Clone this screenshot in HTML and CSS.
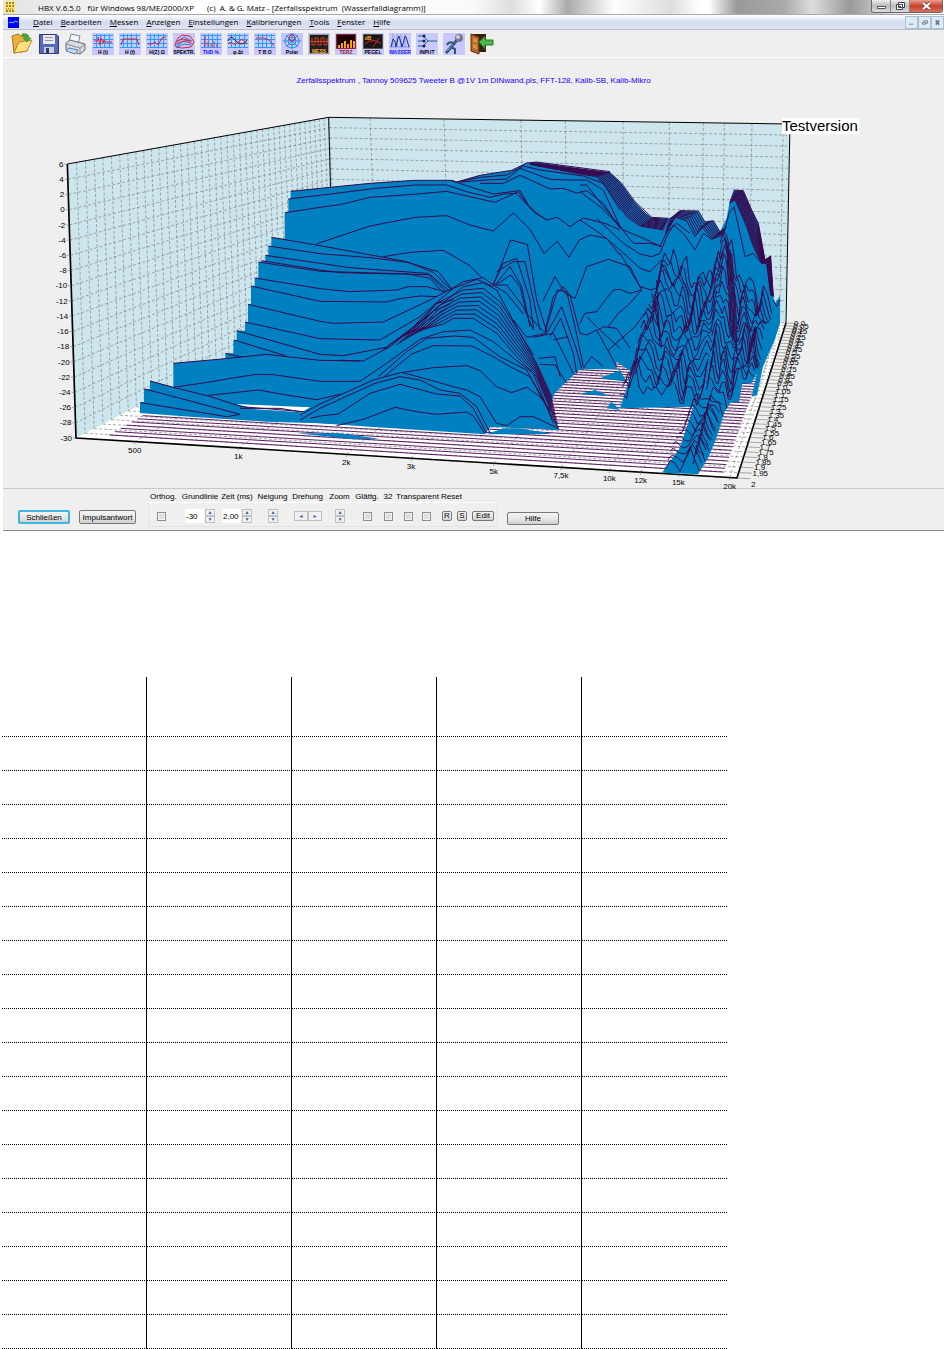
FILE: index.html
```html
<!DOCTYPE html>
<html lang="de">
  <head>
    <meta charset="utf-8" />
    <meta name="viewport" content="width=device-width, initial-scale=1.0" />
    <title>HBX V.6.5.0</title>
    <link rel="stylesheet" href="styles.css">
  </head>
  <body>
    <main class="window">
      <header class="titlebar">
        <svg class="app-icon" viewBox="0 0 10 12"><path fill="#ffe860" d="M0 0h10v12H0z"/><path stroke="#402040" stroke-dasharray="2 1" d="M1 2h8M1 5h8M1 10h8"/><path stroke="#d03030" stroke-dasharray="1 1" d="M1 8h8"/></svg>
        <span class="title-app">HBX V.6.5.0</span>
        <span class="title-os">für Windows 98/ME/2000/XP</span>
        <span>(c)&nbsp; A. &amp; G. Matz - [Zerfallsspektrum&nbsp; (Wasserfalldiagramm)]</span>
        <div class="win-buttons">
          <button aria-label="Minimieren"><svg viewBox="0 0 18 12"><path fill="#fff" stroke="#556" d="M5.500 6.500h8v2h-8z"/></svg></button>
          <button aria-label="Verkleinern"><svg viewBox="0 0 18 12"><path fill="#fff" stroke="#445" d="M7.500 2.500h6v5h-6zM5.500 4.500h6v5h-6z"/><path fill="#445" d="M8 6h2v2H8z"/></svg></button>
          <button class="close" aria-label="Beenden"><svg viewBox="0 0 30 12"><path stroke="#644" stroke-width="3.500" d="M12 3l7 6M19 3l-7 6"/><path stroke="#fff" stroke-width="2" d="M12 3l7 6M19 3l-7 6"/></svg></button>
        </div>
      </header>

      <nav class="menubar">
        <svg class="doc-icon" viewBox="0 0 11 11"><path fill="#00f" d="M0 0h11v11H0z"/><path fill="none" stroke="#6cf" d="M1 6l2-1 2 1 2-2 3 1"/></svg>
        <a href="#"><u>D</u>atei</a>
        <a href="#"><u>B</u>earbeiten</a>
        <a href="#"><u>M</u>essen</a>
        <a href="#"><u>A</u>nzeigen</a>
        <a href="#"><u>E</u>instellungen</a>
        <a href="#"><u>K</u>alibrierungen</a>
        <a href="#"><u>T</u>ools</a>
        <a href="#"><u>F</u>enster</a>
        <a href="#"><u>H</u>ilfe</a>
        <div class="mdi-buttons">
          <button aria-label="Fenster minimieren"><svg viewBox="0 0 12 13"><path stroke="#678" stroke-width="1" d="M3 8.500h5"/></svg></button>
          <button aria-label="Fenster wiederherstellen"><svg viewBox="0 0 12 13"><path fill="none" stroke="#678" d="M5.500 6V4.500h4v3H8M3.500 6.500h4v2h-4z"/></svg></button>
          <button aria-label="Fenster schließen"><svg viewBox="0 0 12 13"><path stroke="#678" stroke-width="2" d="M4 4l4 5M8 4L4 9"/></svg></button>
        </div>
      </nav>

      <div class="toolbar">
        <button class="plain" aria-label="Öffnen"><svg viewBox="0 0 22 22"><path fill="#e8b040" stroke="#a87820" d="M1 3l6-2 3 2 6 1v14L3 20z"/><path fill="#ffe080" stroke="#b88820" d="M3 20L8 9l13-2-5 11z"/><path fill="#40b040" stroke="#187818" stroke-width=".5" d="M11 1c5-1 7 1 7 4h2l-4 4-4-4h3c0-2-2-2-4-2z"/></svg></button>
        <button class="plain" aria-label="Speichern"><svg viewBox="0 0 22 22"><path fill="#5868b8" stroke="#303880" d="M1.500 1.500h17l2 2v17h-19z"/><path fill="#e8e8f0" d="M5 2h12v9H5z"/><path stroke="#99a" d="M7 4.500h8M7 7.500h8"/><path fill="#c8d0d8" d="M6 14h10v6H6z"/><path fill="#303880" d="M8 15h3v5H8z"/></svg></button>
        <button class="plain" aria-label="Drucken"><svg viewBox="0 0 22 22"><path fill="#f4f8ff" stroke="#789" d="M6 1l9 2-2 8-9-2z"/><path fill="#d8dce0" stroke="#667" d="M1 10l4-3 15 4v6l-5 4-14-4z"/><path fill="none" stroke="#889" d="M1 11l14 4v5M15 15l5-4"/><path fill="#b8e0f8" stroke="#679" d="M4 15l9 2-3 4-9-3z"/></svg></button>
        <button aria-label="H(t)"><svg viewBox="0 0 22 22"><use href="#grid"/><path class="red" d="M2 8h4V4l2 8 1-7 2 5 1-3 1 2h7"/><text x="11" y="21">H (t)</text></svg></button>
        <button aria-label="H(f)"><svg viewBox="0 0 22 22"><use href="#grid"/><path class="red" d="M2 12l2-6h14l2 6"/><text x="11" y="21">H (f)</text></svg></button>
        <button aria-label="H(Z)"><svg viewBox="0 0 22 22"><use href="#grid"/><path class="red" d="M2 11h4l3-2 3 3 4-7 4-1"/><text x="11" y="21">H(Z) Ω</text></svg></button>
        <button aria-label="Spektrum"><svg viewBox="0 0 22 22"><path class="red" fill="#f8a0b0" d="M2 11l3-6 4-3 8 1 4 6-3 5-9 1-6-1z"/><path fill="none" stroke="#2080e0" d="M2 13l4-6 5-3 8 4M3 14l6-5 5-2 5 4M4 14l7-3 7 1"/><path class="red" d="M4 8l6-2 8 2M4 11l6-3 8 2"/><text x="11" y="21">SPEKTR.</text></svg></button>
        <button aria-label="THD"><svg viewBox="0 0 22 22"><use href="#grid"/><path class="red" d="M5 3v11M8 9v5M11 11v3M14 8v6M17 11v3"/><text class="blue" x="11" y="21">THD %</text></svg></button>
        <button aria-label="Phase"><svg viewBox="0 0 22 22"><use href="#grid"/><path fill="none" stroke="#222" d="M1 8c3-7 5-3 8 0s7 5 11-1"/><path class="red" d="M1 11c3-5 5 3 9-1s6-5 10 1"/><text x="11" y="21">φ Δt</text></svg></button>
        <button aria-label="TBO"><svg viewBox="0 0 22 22"><use href="#grid"/><path class="red" d="M2 5h8l5 2 5 6"/><text x="11" y="21">T B O</text></svg></button>
        <button aria-label="Polar"><svg viewBox="0 0 22 22"><g fill="none" stroke="#2090e8"><circle cx="11" cy="8" r="7"/><circle cx="11" cy="8" r="4"/><path d="M11 0v16M2 8h18M5 2l12 12M17 2L5 14"/></g><circle class="red" cx="11" cy="5" r="3"/><text x="11" y="21">Polar</text></svg></button>
        <button aria-label="Oszilloskop"><svg viewBox="0 0 22 22"><path fill="#202020" stroke="#999" d="M1.500 1.500h19v19h-19z"/><path stroke="#d84018" fill="none" d="M2 8.500h18M4 5v7h3V5h3v7h3V5h3v7h3V5"/><text class="amber" x="11" y="20">MESS</text></svg></button>
        <button aria-label="Terz"><svg viewBox="0 0 22 22"><path fill="#180000" stroke="#a01838" d="M1.500 1.500h19v14h-19z"/><path stroke="#ffa010" stroke-width="2" d="M4 15v-3M7 15v-5M10 15V8M13 15v-4M16 15V7M19 15V8"/><text class="crimson" x="11" y="21">TERZ</text></svg></button>
        <button aria-label="Pegel"><svg viewBox="0 0 22 22"><path fill="#181818" stroke="#555" d="M1.500 1.500h19v14h-19z"/><path class="red" d="M3 11q8-7 16 0M11 14l6-9"/><text class="amber" x="6" y="7">dB</text><text x="11" y="21">PEGEL</text></svg></button>
        <button aria-label="Wasserfall"><svg viewBox="0 0 22 22"><path stroke="#8098f0" d="M1 14h20M4 1v13M8 1v13M12 1v13M16 1v13"/><path fill="none" stroke="#203080" d="M2 14L4 6l2 2 1 6 2-9 1-2 3 11 3-11 1 1 3 10"/><text class="blue" x="11" y="21">WASSER</text></svg></button>
        <button aria-label="Input"><svg viewBox="0 0 22 22"><path fill="none" stroke="#206090" stroke-width="1" d="M2 3h5l5 5h9M2 8h6M2 13h5l5-5"/><g fill="#124"><circle cx="8" cy="3" r="1.500"/><circle cx="8" cy="8" r="1.500"/><circle cx="8" cy="13" r="1.500"/></g><text x="11" y="21">INPUT</text></svg></button>
        <button aria-label="Mikrofon"><svg viewBox="0 0 22 22"><path stroke="#345078" stroke-width="3" d="M3 20L14 7"/><path stroke="#88b8e8" stroke-width="1" d="M4 18l8-9"/><path fill="none" stroke="#345078" stroke-width="2" d="M4 12c2-4 5-3 8-1M8 14l4 2v5"/><circle cx="16" cy="5" r="4" fill="#778"/><circle cx="15" cy="4" r="2" fill="#ccd"/></svg></button>
        <button class="plain" aria-label="Beenden"><svg viewBox="0 0 22 22"><path fill="#321" d="M2 1h14v18H2z"/><path fill="#b86828" stroke="#5a2c08" d="M1 1l8 3v17l-8-3z"/><path fill="#d89050" d="M3 5l4 1v4L3 9zM3 11l4 1v4l-4-1z"/><path fill="#50b848" stroke="#207820" d="M9 9l6-6v4h8v5h-8v4z"/></svg></button>
        <svg class="defs" width="0" height="0"><defs><g id="grid"><path stroke="#20a0ff" stroke-width="1" d="M1 2.500h20M1 6.500h20M1 10.500h20M1 14.500h20M4.500 1v14M8.500 1v14M12.500 1v14M17.500 1v14"/></g></defs></svg>
      </div>

      <figure class="chart">
        <figcaption>Zerfallsspektrum , Tannoy 509625 Tweeter B @1V 1m DINwand.pls, FFT-128, Kalib-SB, Kalib-Mikro</figcaption>
        <!-- three units per pixel at the normal window width -->
        <svg viewBox="0 0 2823 1164" id="plot">
          <path class="wall" d="M193 192L977 52 1002 609 219 1014zM977 52L2361 72 2349 669 1002 609z"/>
          <path class="floor" d="M219 1014L1002 609 2349 669 2202 1134z"/>
          <g id="wallgrid"></g>
          <g id="floorgrid"></g>
          <path class="edge" d="M193 192L977 52 2361 72 2349 669M977 52l6 230"/>
          <path class="edge bold" d="M193 192l26 822L2202 1134 2349 669"/>
          <g id="surface"></g>
          <g id="labels"></g>
          <path fill="#fff" d="M2337 55h231v48h-231z"/>
          <text class="demo" x="2337" y="94">Testversion</text>
        </svg>
      </figure>

      <form class="panel">
        <div class="main-buttons">
          <button type="button" class="default">Schließen</button>
          <button type="button">Impulsantwort</button>
        </div>
        <div class="settings">
          <label class="cap start" for="orthog">Orthog.</label>
          <label class="cap" for="grundlinie">Grundlinie</label>
          <label class="cap" for="zeit">Zeit (ms)</label>
          <span class="cap">Neigung</span>
          <span class="cap">Drehung</span>
          <span class="cap">Zoom</span>
          <label class="cap" for="glatt">Glättg.</label>
          <label class="cap" for="c32">32</label>
          <label class="cap" for="transparent">Transparent</label>
          <span class="cap start">Reset</span>

          <div class="frame">
            <div class="ctl first"><input type="checkbox" id="orthog"></div>
            <div class="ctl">
              <input type="text" class="active" id="grundlinie" value="-30">
              <span class="spin"><button type="button" aria-label="Grundlinie höher">▲</button><button type="button" aria-label="Grundlinie tiefer">▼</button></span>
            </div>
            <div class="ctl">
              <input type="text" id="zeit" value="2,00">
              <span class="spin"><button type="button" aria-label="Zeit länger">▲</button><button type="button" aria-label="Zeit kürzer">▼</button></span>
            </div>
            <div class="ctl"><span class="spin"><button type="button" aria-label="Neigung mehr">▲</button><button type="button" aria-label="Neigung weniger">▼</button></span></div>
            <div class="ctl"><span class="spin wide"><button type="button" aria-label="Nach links drehen">◄</button><button type="button" aria-label="Nach rechts drehen">►</button></span></div>
            <div class="ctl"><span class="spin"><button type="button" aria-label="Vergrößern">▲</button><button type="button" aria-label="Verkleinern">▼</button></span></div>
            <div class="ctl"><input type="checkbox" id="glatt"></div>
            <div class="ctl"><input type="checkbox" id="c32"></div>
            <div class="ctl pair"><input type="checkbox" id="transparent"><input type="checkbox" aria-label="Transparent Wand"></div>
            <div class="ctl reset"><button type="button">R</button><button type="button">S</button><button type="button" class="edit">Edit</button></div>
          </div>
        </div>
        <button type="button" class="help">Hilfe</button>
      </form>
    </main>

    <table class="notes">
      <tbody id="rows"></tbody>
    </table>
    <script src="script.js"></script>
  </body>
</html>
```
FILE: styles.css
```css
* {
  box-sizing: border-box;
}
body {
  margin: 0;
  background: #fff;
  font-family: "Liberation Sans", sans-serif;
  font-size: 8px;
  color: #000;
}
button,
input {
  font: inherit;
  margin: 0;
  padding: 0;
}

.window {
  margin-left: 3px;
  background: #efefef;
}

.titlebar {
  display: flex;
  align-items: flex-start;
  height: 15px;
  padding-left: 2px;
  font-family: "Open Sans", sans-serif;
  line-height: 15px;
  white-space: nowrap;
  border-bottom: 1px solid #aaa;
  background: linear-gradient(90deg, #e4e4e4, #fff 20%, #fafafa 50%, #ddd 54%, #fff 57%, #aaa 60%, #ddd 63%, #fff 65%, #ddd 71%, #fff 74%, #fff 75%, #999 78%, #aaa 83%, #ddd 86%, #999 90%, #fff 97%);
}
.app-icon {
  width: 10px;
  height: 12px;
  margin: 1px 23px 0 0;
}
.title-app {
  margin-right: 7px;
}
.title-os {
  margin-right: 13px;
}
.win-buttons {
  display: flex;
  margin: 0 1px 0 auto;
  border: 1px solid #667;
  border-top: 0;
  border-radius: 0 0 3px 3px;
  overflow: hidden;
}
.win-buttons button {
  display: flex;
  width: 19px;
  height: 12px;
  border: 0;
  border-right: 1px solid #888;
  background: linear-gradient(#eee, #bbb 50%, #ddd);
}
.win-buttons .close {
  width: 32px;
  border-right: 0;
  background: linear-gradient(#e8a090, #c84028 50%, #d87060);
}
button svg {
  width: 100%;
  height: 100%;
}

.menubar {
  display: flex;
  align-items: center;
  gap: 8px;
  height: 15px;
  padding-left: 5px;
  font-family: "Open Sans", sans-serif;
  background: linear-gradient(#fff, #d4dcee 50%, #dfe5f5);
  border-bottom: 1px solid #b8bcc8;
}
.menubar a {
  color: #000;
  text-decoration: none;
  line-height: 12px;
}
.doc-icon {
  width: 11px;
  height: 11px;
  margin-right: 6px;
}
.mdi-buttons {
  display: flex;
  margin-left: auto;
}
.mdi-buttons button {
  display: flex;
  width: 13px;
  height: 13px;
  border: 1px solid #a8c0d4;
  background: #deebf7;
}

.toolbar {
  display: flex;
  align-items: center;
  gap: 5px;
  height: 28px;
  padding-left: 8px;
  border-bottom: 1px solid #fff;
}
.toolbar button {
  display: flex;
  width: 22px;
  height: 22px;
  border: 0;
  background: #c8c8ff;
}
.toolbar .plain {
  background: none;
}
.toolbar svg {
  overflow: visible;
}
.toolbar text {
  font-size: 5px;
  font-weight: bold;
  text-anchor: middle;
}
.toolbar .red {
  fill: none;
  stroke: #e02030;
}
.toolbar .blue {
  fill: #1818ff;
}
.toolbar .amber {
  fill: #ffb020;
}
.toolbar .crimson {
  fill: #901030;
}
.defs {
  position: absolute;
}

.chart {
  margin: 0;
}
.chart figcaption {
  height: 42px;
  padding-top: 16px;
  line-height: 14px;
  text-align: center;
  color: #1800ff;
}
.chart svg {
  display: block;
  width: 100%;
  overflow: visible;
}
.chart text {
  font-size: 24px;
}
.chart .demo {
  font-size: 45px;
}
.wall {
  fill: #cde6ed;
}
.floor {
  fill: #fff;
}
.edge {
  fill: none;
  stroke: #000;
  stroke-width: 3;
}
.bold {
  stroke-width: 5;
}
.dash {
  fill: none;
  stroke: #808080;
  stroke-width: 2;
  stroke-dasharray: 9 6;
}
.tick {
  stroke: #808080;
  stroke-width: 2;
}
.base {
  fill: none;
  stroke: #5a1c60;
  stroke-width: 3;
}
.body {
  fill: #0080c0;
}
.trace {
  fill: none;
  stroke: #380a50;
  stroke-width: 3;
  stroke-linejoin: round;
}
.hole {
  fill: #fff;
}

.panel {
  display: flex;
  height: 43px;
  border-top: 1px solid #c8c8c8;
  border-bottom: 1px solid #888;
}
.panel button {
  height: 14px;
  border: 1px solid #777;
  border-radius: 2px;
  background: linear-gradient(#f4f4f4, #e8e8e8 50%, #d0d0d0);
  line-height: 11px;
}
.main-buttons {
  display: flex;
  gap: 9px;
  padding: 21px 12px 0 15px;
}
.main-buttons button {
  width: 57px;
}
.main-buttons .default {
  width: 52px;
  border: 2px solid #3cb8e0;
  line-height: 9px;
}
.settings {
  display: grid;
  grid-template-columns: 33px 38px 36px 35px 35px 29px 26px 16px 43px 59px;
  grid-template-rows: 13px 25px;
}
.frame {
  grid-column: 1 / -1;
  display: grid;
  grid-template-columns: subgrid;
  border: 1px solid #dce4ec;
  border-top-color: #fff;
}
.cap {
  text-align: center;
  line-height: 15px;
  white-space: nowrap;
}
.start {
  text-align: left;
  padding-left: 2px;
}
.ctl {
  display: flex;
  justify-content: center;
  align-items: center;
  padding-top: 3px;
}
.first {
  justify-content: flex-start;
  padding-left: 8px;
}
.pair {
  gap: 9px;
}
.reset {
  gap: 5px;
}
.ctl input[type="checkbox"] {
  appearance: none;
  width: 9px;
  height: 9px;
  border: 1px solid #8a8f94;
  background: #ddd;
  box-shadow: inset 0 0 0 1px #f4f4f4;
}
.ctl input[type="text"] {
  width: 19px;
  height: 14px;
  padding-left: 1px;
  border: 0;
  background: #fff;
}
.ctl .active {
  border: 1px solid #90c0e8;
}
.spin {
  display: flex;
  flex-flow: column;
  margin-left: 1px;
}
.spin button {
  width: 10px;
  height: 7px;
  border: 1px solid #c0c0c0;
  border-radius: 0;
  background: #f0f0f0;
  font-size: 5px;
  line-height: 5px;
  color: #3858b8;
}
.spin.wide {
  flex-flow: row;
}
.wide button {
  width: 14px;
  height: 10px;
  line-height: 8px;
}
.reset button {
  width: 10px;
  height: 10px;
  line-height: 8px;
}
.reset .edit {
  width: 22px;
}
.panel .help {
  width: 52px;
  height: 13px;
  margin: 23px 0 0 9px;
}

.notes {
  width: 100%;
  max-width: 725px;
  margin: 146px 0 0 2px;
  table-layout: fixed;
  border-spacing: 0;
}
.notes td {
  height: 34px;
  padding: 0;
  border-bottom: 1px dotted #000;
  border-right: 1px solid #000;
}
.notes tr:first-child td {
  height: 60px;
}
.notes td:last-child {
  border-right: 0;
}
```
FILE: script.js
```js
const NS = "http://www.w3.org/2000/svg";

function add(parent, tag, attrs, text) {
  const el = document.createElementNS(NS, tag);
  for (const key in attrs) el.setAttribute(key, attrs[key]);
  if (text !== undefined) el.textContent = text;
  document.getElementById(parent).appendChild(el);
  return el;
}
function line(parent, cls, a, b) {
  add(parent, "path", { class: cls, d: `M${a[0]} ${a[1]}L${b[0]} ${b[1]}` });
}
function mix(a, b, t) {
  return [a[0] + (b[0] - a[0]) * t, a[1] + (b[1] - a[1]) * t];
}
// perspective position of a time value, 0 is the front
function depth(t) {
  return (1.42 * t) / (1 + 0.42 * t);
}

const frontTop = [193, 192], frontBottom = [219, 1014];
const backTop = [977, 52], backBottom = [1002, 609];
const rightTop = [2361, 72], rightBottom = [2349, 669];
const frontRight = [2202, 1134];

// level lines, every 2 dB
for (let i = 0; i <= 18; i++) {
  const p = mix(frontTop, frontBottom, i / 18);
  const q = mix(backTop, backBottom, i / 18);
  if (i > 0 && i < 18) {
    line("wallgrid", "dash", p, q);
    line("wallgrid", "dash", q, mix(rightTop, rightBottom, i / 18));
  }
  line("labels", "tick", [p[0] - 9, p[1]], p);
  add("labels", "text", { x: p[0] - 12, y: p[1] + 8, "text-anchor": "end" }, 6 - 2 * i);
}

// time lines
for (let i = 0; i <= 40; i++) {
  const t = depth(i / 40);
  const l = mix(frontBottom, backBottom, t);
  const r = mix(frontRight, rightBottom, t);
  line("wallgrid", "dash", mix(frontTop, backTop, t), l);
  line("floorgrid", "dash", l, r);
  line("labels", "tick", r, [r[0] + 40, r[1] + 2]);
  const value = i === 0 ? "2" : ((40 - i) / 20).toFixed(2).replace(".", ",").replace(/0$/, "");
  add("labels", "text", { x: r[0] + 42 - 18 * t, y: r[1] + (i ? 9 : 27) }, value);
}
for (let i = 0; i < 56; i++) {
  const t = depth((i + 0.5) / 56);
  line("floorgrid", "base", mix([310, 1010], backBottom, t), mix([2160, 1122], [2325, 669], t));
}

// frequency lines
const freqs = [
  ["500", 395, 1101], ["1k", 706, 1323], ["2k", 1030, 1554], ["3k", 1224, 1687], ["5k", 1472, 1860],
  ["7,5k", 1674, 1999], ["10k", 1819, 2101], ["12k", 1913, 2164], ["15k", 2026, 2247], ["20k", 2180, 2341],
];
for (const [name, x, back] of freqs) {
  const f = mix(frontBottom, frontRight, (x - 219) / 1983);
  const w = (back - 977) / 1384;
  const b = mix(backBottom, rightBottom, w);
  line("wallgrid", "dash", mix(backTop, rightTop, w), b);
  line("floorgrid", "dash", f, b);
  line("labels", "tick", f, [f[0], f[1] + 8]);
  add("labels", "text", { x: x, y: f[1] + 33, "text-anchor": "middle" }, name);
}

// the spectrum surface
const pts = (s) => s.trim().split(" ").map((p) => p.split(",").map(Number));
function shape(cls, dx, s) {
  add("surface", "path", { class: cls, transform: `translate(${dx} 0)`, d: "M" + s.trim().replace(/ /g, "L") + "z" });
}
function trace(dx, list) {
  for (const p of list) {
    const d = "M" + p.map((q) => q.join(" ")).join("L");
    add("surface", "path", { class: "trace", transform: `translate(${dx} 0)`, d: d });
  }
}
const traces = (dx, text) => trace(dx, text.trim().split("\n").map(pts));
function band(dx, from, to, n, rough = 0) {
  const a = pts(from), b = pts(to);
  const list = [];
  for (let i = 0; i <= n; i++) {
    const row = a.map((p, k) => mix(p, b[k], i / n));
    const out = [];
    row.forEach((p, k) => {
      if (k && rough) {
        const m = mix(row[k - 1], p, 0.5);
        out.push([m[0], m[1] + Math.sin(i * 0.9 + k * 4.1) * rough]);
      }
      out.push([p[0], p[1] + Math.sin(i * 0.7 + k * 2.9) * rough]);
    });
    list.push(out);
  }
  trace(dx, list);
}

shape("body", 0, `411,939 411,906 423,906 423,867 441,867 441,842 511,861 511,790 667,776 667,760 691,760 691,720 701,720 701,692 726,692 726,666 735,666 735,613 744,613 744,558 755,558 755,534 766,534 766,487 787,482 787,466 796,466 796,438 805,438 805,412 845,417 845,338 856,338 856,297 863,297 863,274 951,265 1101,250 1236,241 1346,241 1361,246 1431,226 1526,211 1571,189 1601,186 1821,218 1851,245 1891,300 1926,340 1951,355 2001,355 2031,332 2086,333 2106,366 2131,362 2151,395 2171,355 2181,300 2193,270 2221,272 2246,330 2266,370 2286,480 2303,468 2311,590 2316,610 2331,588 2331,670 2315,720 2280,800 2262,885 2246,890 2262,820 2245,850 2218,850 2208,905 2184,907 2165,935 2140,1015 2115,1075 2085,1123 1977,1118 2030,1045 2065,940 2070,920 1851,925 1872,860 1885,815 1840,785 1842,808 1731,808 1690,845 1655,880 1643,915 1652,960 1670,990 1560,984 1462,981 1446,1003 1100,980 950,970 790,965 560,950`);
shape("hole", 0, "700,912 830,918 922,922 895,937 760,928");
shape("body", 0, "880,1000 1010,1000 1130,1016 1050,1018");
shape("body", 951, "500,1003 550,985 600,985 700,1002");
for (const s of ["780,882 825,870 870,888", "860,925 875,905 900,930", "840,835 900,810 920,845"]) shape("body", 951, s);

traces(111, `
752,274 840,265
745,297 840,286
735,338 840,322
694,412 840,437
829,433 840,428
685,438 840,461
676,466 840,490
664,482 840,510
655,486 840,514
644,534 840,566
633,558 840,604
624,613 840,664
615,666 840,716
590,692 840,763
582,720 740,768
556,760 606,772
400,790 556,776 680,763 840,781 960,783
400,862 510,846 590,832 650,823 700,824 840,844
505,886 600,876 655,870 740,885 830,899 900,883
330,843 400,862 505,888 605,920 790,935
314,867 440,900 600,943
302,908 560,950 600,943
600,925 720,925 780,935
780,945 840,912
780,960 840,925
810,955 840,948`);
traces(951, `
0,265 150,250 285,241 395,241 410,246 480,226 575,211 620,189 650,186 870,215
0,286 160,266 285,255 380,255 440,275 510,292 550,282 590,280 640,335 680,360 712,352 750,380 790,354 830,364 860,372 900,390
0,322 60,314 150,292 280,283 380,274 450,290 525,307 595,275 620,310 650,340 680,360
395,242 455,262 520,282 600,272 625,315
410,246 480,232 560,225 610,198 660,210 790,228 850,250 900,330
420,246 500,240 560,237 600,205 640,220 690,238 750,240 800,240 850,270 900,380
480,250 550,250 600,226 640,244 690,267 730,265 770,279 800,272 850,310 900,385
0,428 150,378 285,352 380,347 450,375 520,393 580,339 630,388 672,460 712,424 747,472 778,420 810,405 860,415 900,465
190,470 270,457 370,451 450,497 485,533
0,437 180,470 250,483 355,515 395,566
0,461 150,473 265,487 340,517 395,570
0,490 90,503 290,518 325,520 390,575
0,510 60,518 325,524 380,575
0,514 265,522 330,535 370,578
0,566 90,575 230,570 265,560 320,560 375,575
0,604 200,606 240,596 300,588 350,590
0,664 40,670 190,666 330,600 395,566 430,545 490,533 520,555 560,580 610,642
0,716 180,720 300,650 400,565 470,538 520,560
0,763 70,767 200,742 300,665 430,560 490,548 530,570 600,700 640,765
60,781 130,783 210,740 320,650
0,844 120,844 200,790 300,718 370,695 450,690 520,725 600,790 640,820 700,970
175,830 260,755 320,715 400,708 460,712 540,770 620,810 690,935
195,828 275,762 340,737 455,738 520,770 570,800 630,830 715,985
0,912 160,840 245,817 330,840 400,860 440,870 480,890 530,970 560,977 600,950 640,950 715,985
250,817 340,803 440,797 480,812 530,860 575,878 620,862 660,890 690,930
0,925 165,850 240,830 300,840 360,870 420,880 470,920 510,998
0,948 55,942 150,880 240,853 350,882 420,888 460,925 500,1000
50,977 130,958 225,922 290,935 350,943 440,936 460,948 495,1000
520,555 572,420 622,433 650,600 680,695
520,552 550,490 590,475 630,600 640,685
530,515 580,485 615,485 660,690
525,555 570,500 605,560 630,680
530,553 572,525 600,560 620,640 670,695
520,555 560,555 610,620 640,690
675,695 700,590 730,560 750,585 780,700 800,705 830,690 890,800
675,700 712,570 740,575 765,680 790,800
668,605 705,530 735,580 765,595 800,500 865,478 900,490 930,500 965,570
680,700 725,620 770,750 785,805
690,710 722,655 760,760 770,820
580,660 620,712 680,700
640,712 700,700 760,820
700,720 745,710
780,670 795,640 830,635 860,595 880,570 900,568 930,580 965,570
835,690 850,680 890,685 930,745
865,680 895,640 925,615 965,570
790,805 815,770 850,800
655,775 705,770 720,830
660,793 705,795 740,850`);
// crest of the ridge around 4k
band(951, "230,735 290,680 350,610 430,570 490,565 540,605 600,700 650,790 695,890", "300,690 340,680 370,672 400,655 460,655 530,700 590,770 650,830 715,985", 7);
band(951, "190,748 270,690 350,610 400,600", "250,705 290,690 320,680 370,640", 3);
// treble slope and peaks
band(1731, "-150,188 0,207 90,218 125,250 165,305 215,352 265,355", "-150,193 0,222 50,230 85,270 140,350 180,378 250,390", 11);
band(1731, "265,360 300,332 355,333 375,366 400,362 420,395 440,380", "255,405 285,352 320,362 345,410 365,380 395,415 430,400", 7);
band(1731, "462,270 490,272 515,330 535,370 555,480 572,468 580,590", "448,310 465,300 500,380 520,440 545,490 560,490 572,585", 13);
traces(1731, `
0,255 20,255 70,320 130,390 190,415 240,438 262,395 290,370 330,400
0,275 60,320 120,380 160,430 210,430 245,440
50,355 130,430 180,462 215,470 240,460 260,410 280,375 310,400 345,450 370,400 395,418 430,405 447,340 462,320 480,400 495,470 520,460 545,490
0,360 60,400 120,450 180,505 210,515 245,480
120,460 180,560 215,570 235,560 245,490 280,560 300,520 330,590
215,580 230,630 245,740
230,540 240,740
85,750 165,680 205,625 240,690
20,650 60,690 120,745
580,600 590,620 600,600`);
band(1731, "245,490 262,470 280,460 300,510 320,490 335,540 350,580 370,490 385,540 400,520 415,470 430,440", "120,910 140,870 165,810 190,860 215,890 230,850 260,870 285,850 300,905 320,870 350,900 375,860", 16, 26);
band(1731, "420,430 440,400 455,430 470,520 485,560 500,520 520,570 535,610 550,580 575,620", "380,890 395,820 410,880 425,840 445,900 460,870 475,800 490,850 505,790 520,850", 15, 24);
band(1731, "430,400 440,440 446,560 450,700", "455,460 462,560 468,640 470,760", 5);
band(1731, "340,900 355,880 375,900 400,900 425,920", "255,1100 270,1085 300,1112 330,1040 358,1115", 10, 9);
band(1731, "390,900 400,860 430,880 440,920", "340,1100 350,1030 360,1060 375,1080", 6, 8);

const rows = document.getElementById("rows");
for (let i = 0; i < 19; i++) {
  const row = rows.insertRow();
  for (let k = 0; k < 5; k++) row.insertCell();
}
```
